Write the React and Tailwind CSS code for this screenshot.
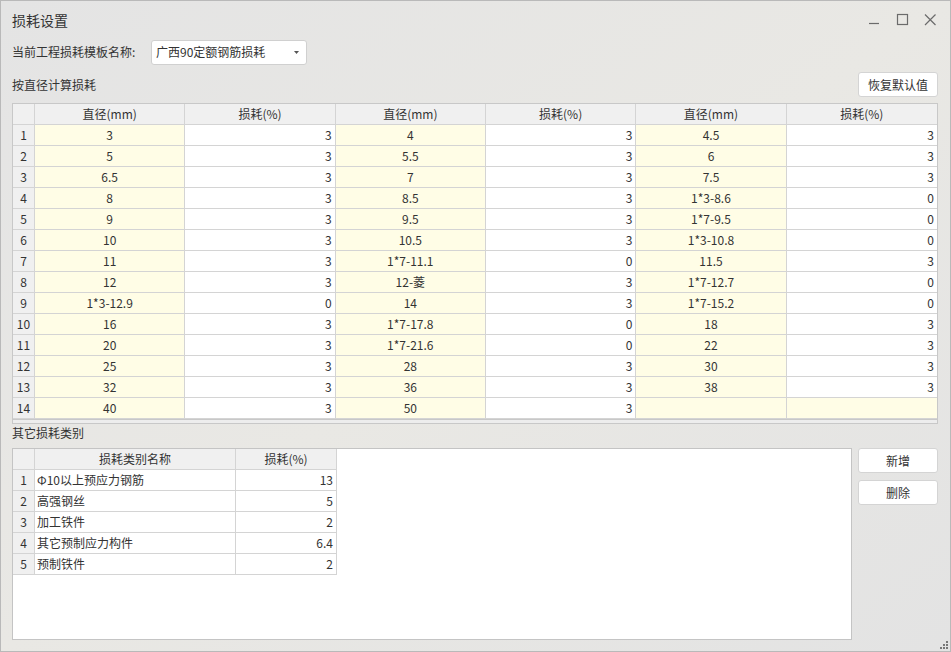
import React from "react";

const font = { fontFamily: '"Microsoft YaHei", "Noto Sans CJK SC", "Noto Sans", sans-serif' };

const pairs = [
  [
    ["3", "3"], ["5", "3"], ["6.5", "3"], ["8", "3"], ["9", "3"], ["10", "3"], ["11", "3"],
    ["12", "3"], ["1*3-12.9", "0"], ["16", "3"], ["20", "3"], ["25", "3"], ["32", "3"], ["40", "3"],
  ],
  [
    ["4", "3"], ["5.5", "3"], ["7", "3"], ["8.5", "3"], ["9.5", "3"], ["10.5", "3"], ["1*7-11.1", "0"],
    ["12-菱", "3"], ["14", "3"], ["1*7-17.8", "0"], ["1*7-21.6", "0"], ["28", "3"], ["36", "3"], ["50", "3"],
  ],
  [
    ["4.5", "3"], ["6", "3"], ["7.5", "3"], ["1*3-8.6", "0"], ["1*7-9.5", "0"], ["1*3-10.8", "0"], ["11.5", "3"],
    ["1*7-12.7", "0"], ["1*7-15.2", "0"], ["18", "3"], ["22", "3"], ["30", "3"], ["38", "3"], ["", ""],
  ],
];

const others = [
  ["Φ10以上预应力钢筋", "13"],
  ["高强钢丝", "5"],
  ["加工铁件", "2"],
  ["其它预制应力构件", "6.4"],
  ["预制铁件", "2"],
];

const Btn = ({ children }) => (
  <button className="h-[25px] w-[80px] rounded-[3px] border border-[#d4d4d4] bg-white text-[12px] text-[#333] leading-none">
    {children}
  </button>
);

const WindowControls = () => (
  <div className="flex items-center gap-[14px] pr-[13px] text-[#6b6b6b]">
    <svg width="14" height="14" viewBox="0 0 14 14">
      <line x1="2" y1="10.5" x2="12" y2="10.5" stroke="currentColor" strokeWidth="1.2" />
    </svg>
    <svg width="14" height="14" viewBox="0 0 14 14">
      <rect x="2.5" y="1.5" width="10" height="10" fill="none" stroke="currentColor" strokeWidth="1.2" />
    </svg>
    <svg width="14" height="14" viewBox="0 0 14 14">
      <path d="M2 1.5 L12.5 12 M12.5 1.5 L2 12" stroke="currentColor" strokeWidth="1.2" />
    </svg>
  </div>
);

const DiameterTable = () => {
  const headCell = "h-[21px] flex items-center justify-center border-r border-b border-[#d4d4d4] bg-[#f0f0f0]";
  return (
    <div className="border border-[#c8c8c8] bg-white">
      <div className="grid grid-cols-[22px_repeat(6,minmax(0,1fr))] text-[12px] text-[#333]">
        <div className={headCell} />
        {[0, 1, 2].map((p) => (
          <React.Fragment key={p}>
            <div className={headCell}>直径(mm)</div>
            <div className={headCell + (p === 2 ? " border-r-0" : "")}>损耗(%)</div>
          </React.Fragment>
        ))}
        {pairs[0].map((_, r) => (
          <React.Fragment key={r}>
            <div className="h-[21px] flex items-center justify-center border-r border-b border-[#d4d4d4] bg-[#f0f0f0]">
              {r + 1}
            </div>
            {[0, 1, 2].map((p) => {
              const [d, l] = pairs[p][r];
              const empty = d === "";
              return (
                <React.Fragment key={p}>
                  <div className="h-[21px] flex items-center justify-center border-r border-b border-[#d4d4d4] bg-[#fffde6]">
                    {d}
                  </div>
                  <div
                    className={
                      "h-[21px] flex items-center justify-end pr-[3px] border-b border-[#d4d4d4] " +
                      (p === 2 ? "" : "border-r ") +
                      (empty ? "bg-[#fffde6]" : "bg-white")
                    }
                  >
                    {l}
                  </div>
                </React.Fragment>
              );
            })}
          </React.Fragment>
        ))}
      </div>
      <div className="h-[4px] border-t border-[#c8c8c8] bg-[#ededed]" />
    </div>
  );
};

const OtherTable = () => (
  <div className="h-[192px] flex-1 border border-[#c4c4c4] bg-white">
    <div className="grid w-[325px] grid-cols-[22px_201px_101px] text-[12px] text-[#333]">
      <div className="h-[21px] border-r border-b border-[#d4d4d4] bg-[#f0f0f0]" />
      <div className="h-[21px] flex items-center justify-center border-r border-b border-[#d4d4d4] bg-[#f0f0f0]">损耗类别名称</div>
      <div className="h-[21px] flex items-center justify-center border-r border-b border-[#d4d4d4] bg-[#f0f0f0]">损耗(%)</div>
      {others.map(([n, v], i) => (
        <React.Fragment key={i}>
          <div className="h-[21px] flex items-center justify-center border-r border-b border-[#d4d4d4] bg-[#f0f0f0]">{i + 1}</div>
          <div className="h-[21px] flex items-center pl-[2px] border-r border-b border-[#d4d4d4]">{n}</div>
          <div className="h-[21px] flex items-center justify-end pr-[3px] border-r border-b border-[#d4d4d4]">{v}</div>
        </React.Fragment>
      ))}
    </div>
  </div>
);

export default function App() {
  return (
    <div
      style={font}
      className="relative flex h-[652px] w-[951px] flex-col overflow-hidden border border-[#b9b9b9] bg-gradient-to-br from-[#e4e4e4] via-[#e9e8e4] to-[#e3e3e3] text-[#333]"
    >
      <div className="flex h-[38px] shrink-0 items-center justify-between">
        <div className="pl-[11px] text-[14px]">损耗设置</div>
        <WindowControls />
      </div>

      <div className="flex h-[26px] items-center px-[11px]">
        <span className="w-[139px] text-[12px]">当前工程损耗模板名称:</span>
        <div className="relative flex h-[25px] w-[156px] items-center rounded-[3px] border border-[#d0d0d0] bg-white pl-[4px] text-[12px]">
          广西90定额钢筋损耗
          <svg className="absolute right-[7px] top-[10px]" width="5" height="4" viewBox="0 0 5 4">
            <path d="M0 0 L5 0 L2.5 3 Z" fill="#555" />
          </svg>
        </div>
      </div>

      <div className="mt-[7px] flex h-[25px] items-center justify-between px-[11px] pr-[12px]">
        <span className="text-[12px]">按直径计算损耗</span>
        <Btn>恢复默认值</Btn>
      </div>

      <div className="mt-[6px] px-[11px] pr-[12px]">
        <DiameterTable />
      </div>

      <div className="flex h-[18px] items-center px-[11px] text-[12px]">其它损耗类别</div>

      <div className="mt-[6px] flex gap-[6px] px-[11px] pr-[12px]">
        <OtherTable />
        <div className="flex flex-col gap-[7px]">
          <Btn>新增</Btn>
          <Btn>删除</Btn>
        </div>
      </div>

      <svg className="absolute bottom-[2px] right-[2px]" width="9" height="9" viewBox="0 0 9 9">
        {[
          [7, 1], [4, 4], [7, 4], [1, 7], [4, 7], [7, 7],
        ].map(([x, y], i) => (
          <rect key={i} x={x} y={y} width="2" height="2" fill="#777" />
        ))}
      </svg>
    </div>
  );
}
